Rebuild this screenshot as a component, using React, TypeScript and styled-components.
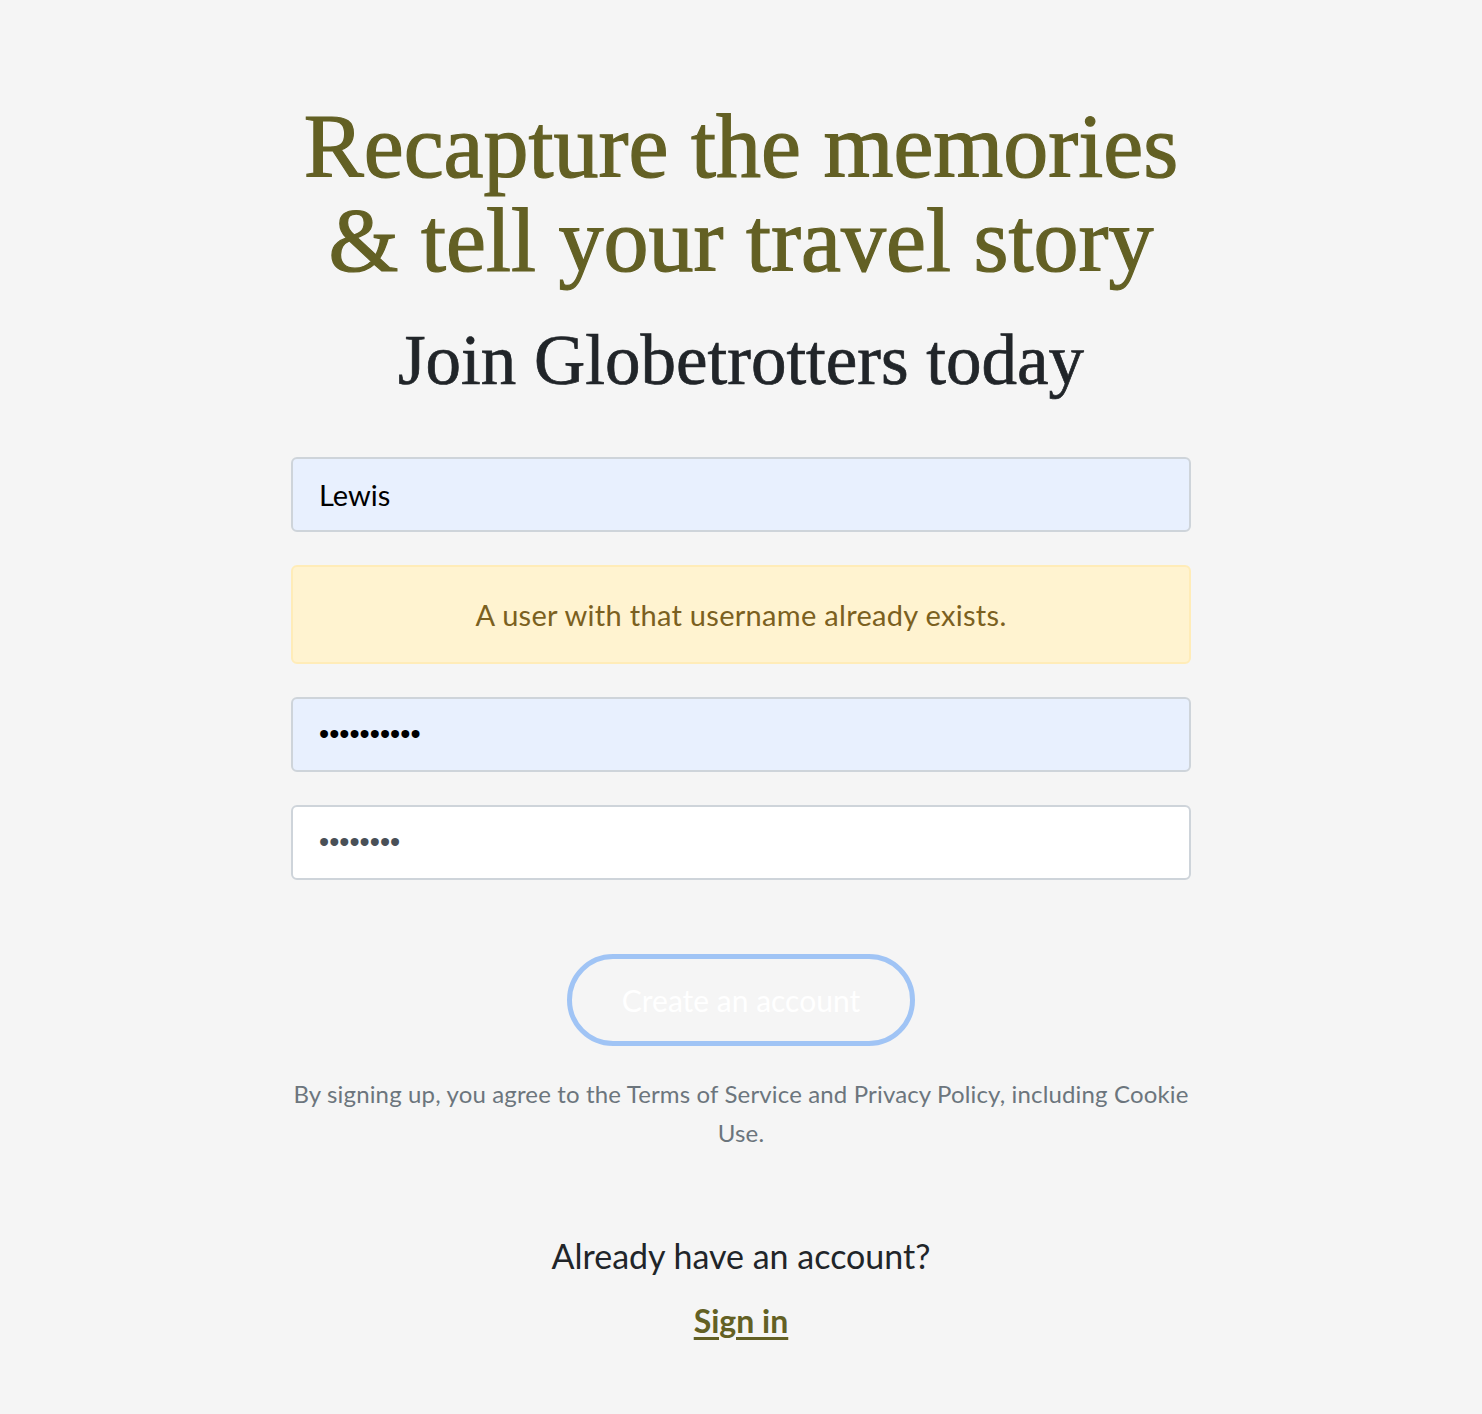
import React from "react";
import styled, { createGlobalStyle } from "styled-components";

const GlobalStyle = createGlobalStyle`
  body {
    margin: 0;
    background-color: #f5f5f5;
    font-family: "Lato", "Noto Sans", sans-serif;
    color: #212529;
  }
`;

const Page = styled.main`
  display: flex;
  flex-direction: column;
  align-items: center;
  padding: 100px 0 60px;
`;

const Container = styled.div`
  width: 900px;
  display: flex;
  flex-direction: column;
  align-items: center;
`;

const Headline = styled.h1`
  margin: 0;
  font-family: "Liberation Serif", "DejaVu Serif", serif;
  font-weight: 400;
  font-size: 90px;
  line-height: 94px;
  color: #636024;
  text-align: center;
  white-space: nowrap;
  -webkit-text-stroke: 1.2px #636024;
`;

const SubHeadline = styled.h2`
  margin: 30px 0 0;
  font-family: "Liberation Serif", "DejaVu Serif", serif;
  font-weight: 400;
  font-size: 71px;
  line-height: 84px;
  color: #212529;
  text-align: center;
  -webkit-text-stroke: 0.7px #212529;
`;

const Form = styled.form`
  width: 100%;
  margin-top: 55px;
  display: flex;
  flex-direction: column;
  gap: 33px;
`;

const Field = styled.input<{ $autofilled?: boolean }>`
  box-sizing: border-box;
  width: 100%;
  height: 75px;
  padding: 0 26px;
  border: 2px solid #ced4da;
  border-radius: 6px;
  background-color: ${(p) => (p.$autofilled ? "#e8f0fe" : "#ffffff")};
  font-family: ${(p) =>
    p.type === "password"
      ? '"Liberation Sans", Arial, sans-serif'
      : '"Lato", "Noto Sans", sans-serif'};
  font-size: 29px;
  color: ${(p) => (p.$autofilled ? "#000000" : "#495057")};
  outline: none;
`;

const Alert = styled.div`
  box-sizing: border-box;
  height: 99px;
  display: flex;
  align-items: center;
  justify-content: center;
  background-color: #fff3d0;
  border: 2px solid #ffecb8;
  border-radius: 6px;
  font-size: 29px;
  letter-spacing: 0.3px;
  color: #7b6020;
`;

const Actions = styled.div`
  margin-top: 74px;
  display: flex;
  flex-direction: column;
  align-items: center;
`;

const SubmitButton = styled.button`
  box-sizing: border-box;
  width: 348px;
  height: 92px;
  border: 5px solid #a0c4f5;
  border-radius: 46px;
  background: transparent;
  color: #ffffff;
  font-family: "Lato", "Noto Sans", sans-serif;
  font-size: 30px;
  cursor: pointer;
`;

const Terms = styled.p`
  margin: 28px 0 0;
  font-size: 24px;
  letter-spacing: 0.15px;
  line-height: 39px;
  color: #6c757d;
  text-align: center;
`;

const SignInBlock = styled.div`
  margin-top: 84px;
  display: flex;
  flex-direction: column;
  align-items: center;
  gap: 25px;
`;

const Prompt = styled.p`
  margin: 0;
  font-size: 34px;
  line-height: 40px;
  color: #212529;
`;

const SignInLink = styled.a`
  font-size: 32px;
  line-height: 40px;
  font-weight: 700;
  color: #636024;
  text-decoration: underline;
  text-underline-offset: 4px;
`;

export default function App() {
  return (
    <>
      <GlobalStyle />
      <Page>
        <Container>
          <Headline>
            Recapture the memories
            <br />& tell your travel story
          </Headline>
          <SubHeadline>Join Globetrotters today</SubHeadline>

          <Form onSubmit={(e) => e.preventDefault()}>
            <Field type="text" defaultValue="Lewis" $autofilled />
            <Alert>A user with that username already exists.</Alert>
            <Field type="password" defaultValue="1234567890" $autofilled />
            <Field type="password" defaultValue="12345678" />
          </Form>

          <Actions>
            <SubmitButton type="submit">Create an account</SubmitButton>
            <Terms>
              By signing up, you agree to the Terms of Service and Privacy
              Policy, including Cookie
              <br />
              Use.
            </Terms>
          </Actions>

          <SignInBlock>
            <Prompt>Already have an account?</Prompt>
            <SignInLink href="#">Sign in</SignInLink>
          </SignInBlock>
        </Container>
      </Page>
    </>
  );
}
